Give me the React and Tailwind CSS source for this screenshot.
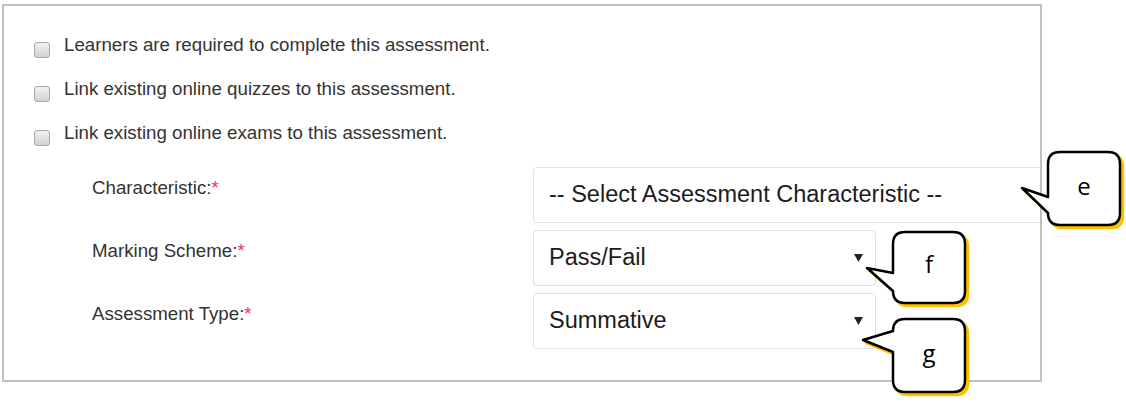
import React from 'react';

const checks = [
  'Learners are required to complete this assessment.',
  'Link existing online quizzes to this assessment.',
  'Link existing online exams to this assessment.',
];

const fields = [
  { label: 'Characteristic:', value: '-- Select Assessment Characteristic --', wide: true },
  { label: 'Marking Scheme:', value: 'Pass/Fail' },
  { label: 'Assessment Type:', value: 'Summative' },
];

// callout boxes drawn over the form
const callouts = [
  { letter: 'e', x: 1048, y: 152, w: 72, h: 73, tip: [1022, 188], j1: 197, j2: 213, tx: 1084, ty: 195 },
  { letter: 'f', x: 893, y: 232, w: 72, h: 71, tip: [867, 268], j1: 273, j2: 291, tx: 929, ty: 273 },
  { letter: 'g', x: 893, y: 319, w: 72, h: 73, tip: [863, 340], j1: 331, j2: 352, tx: 929, ty: 362 },
];

const bubblePath = ({ x, y, w, h, tip, j1, j2 }) => {
  const r = 12;
  return `M${x + r},${y} H${x + w - r} Q${x + w},${y} ${x + w},${y + r} V${y + h - r} Q${x + w},${y + h} ${x + w - r},${y + h} H${x + r} Q${x},${y + h} ${x},${y + h - r} V${j2} L${tip[0]},${tip[1]} L${x},${j1} V${y + r} Q${x},${y} ${x + r},${y} Z`;
};

const Checkbox = () => (
  <span className="mt-[8px] w-[16px] h-[16px] shrink-0 rounded-[3px] border border-[#a8a8a8] bg-linear-to-b from-[#f2f2f2] to-[#d2d2d2]" />
);

const Arrow = () => (
  <svg width="9" height="8" viewBox="0 0 9 8">
    <polygon points="0,0 9,0 4.5,8" fill="#222" />
  </svg>
);

export default function App() {
  return (
    <div className="relative w-[1126px] h-[402px] bg-white overflow-hidden pt-[4px] pl-[2px] font-['Liberation_Sans',Arial,sans-serif]">
      <div className="w-[1040px] h-[378px] border-2 border-[#c0c0c0] overflow-hidden pt-[28px] pl-[30px]">
        {/* Checkboxes */}
        <div className="flex flex-col gap-[22px]">
          {checks.map((c) => (
            <div key={c} className="flex items-start h-[22px]">
              <Checkbox />
              <span className="ml-[14px] text-[18.7px] leading-[22px] text-[#333]">{c}</span>
            </div>
          ))}
        </div>

        {/* Fields */}
        <div className="mt-[23px] flex flex-col gap-[7px]">
          {fields.map((f) => (
            <div key={f.label} className="flex">
              <div className="ml-[58px] w-[441px] shrink-0 pt-[10px] text-[18.7px] leading-[22px] text-[#333]">
                {f.label}
                <span className="text-[#e8336b]">*</span>
              </div>
              <div
                className={`h-[56px] shrink-0 border border-[#dce1e6] rounded-[4px] flex items-center justify-between pl-[15px] pr-[12px] text-[23.5px] text-[#1c1c1c] ${
                  f.wide ? 'w-[520px]' : 'w-[343px]'
                }`}
              >
                <span>{f.value}</span>
                {!f.wide && <Arrow />}
              </div>
            </div>
          ))}
        </div>
      </div>

      {/* Callouts */}
      <svg className="absolute left-0 top-0 pointer-events-none" width="1126" height="402" viewBox="0 0 1126 402">
        {callouts.map((c) => {
          const d = bubblePath(c);
          return (
            <g key={c.letter}>
              <path d={d} transform="translate(3,3)" fill="#ffc000" stroke="#ffc000" strokeWidth="2.5" strokeLinejoin="round" />
              <path d={d} fill="#fff" stroke="#000" strokeWidth="2.5" strokeLinejoin="round" />
              <text x={c.tx} y={c.ty} textAnchor="middle" fontSize="24" fontFamily="'Open Sans', sans-serif" fill="#000">
                {c.letter}
              </text>
            </g>
          );
        })}
      </svg>
    </div>
  );
}
